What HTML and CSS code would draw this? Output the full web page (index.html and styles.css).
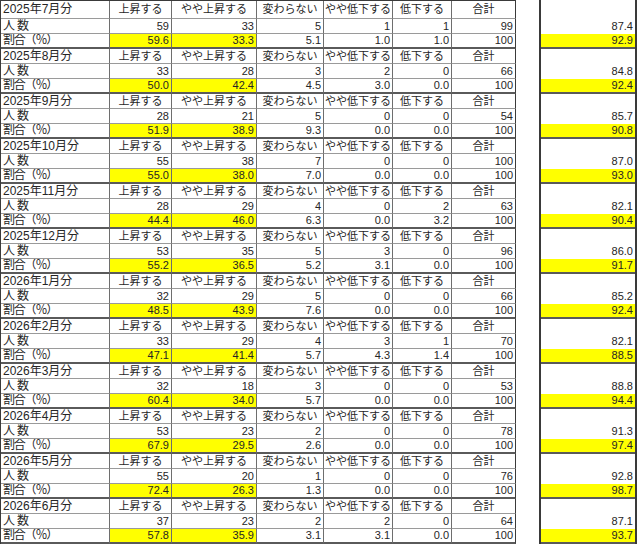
FILE: index.html
```html
<!DOCTYPE html>
<html lang="ja">
<head>
<meta charset="utf-8">
<title>集計表</title>
<link rel="stylesheet" href="styles.css">
</head>
<body>
<div class="sheet">
  <div class="table">
    <div class="block first">
      <div class="c lab">2025年7月分</div><div class="c h">上昇する</div><div class="c h">やや上昇する</div><div class="c h">変わらない</div><div class="c h">やや低下する</div><div class="c h">低下する</div><div class="c h">合計</div>
      <div class="c lab wide">人数</div><div class="c n">59</div><div class="c n">33</div><div class="c n">5</div><div class="c n">1</div><div class="c n">1</div><div class="c n">99</div>
      <div class="c lab pct">割合（％）</div><div class="c n y">59.6</div><div class="c n y">33.3</div><div class="c n">5.1</div><div class="c n">1.0</div><div class="c n">1.0</div><div class="c n">100</div>
    </div>
    <div class="block">
      <div class="c lab">2025年8月分</div><div class="c h">上昇する</div><div class="c h">やや上昇する</div><div class="c h">変わらない</div><div class="c h">やや低下する</div><div class="c h">低下する</div><div class="c h">合計</div>
      <div class="c lab wide">人数</div><div class="c n">33</div><div class="c n">28</div><div class="c n">3</div><div class="c n">2</div><div class="c n">0</div><div class="c n">66</div>
      <div class="c lab pct">割合（％）</div><div class="c n y">50.0</div><div class="c n y">42.4</div><div class="c n">4.5</div><div class="c n">3.0</div><div class="c n">0.0</div><div class="c n">100</div>
    </div>
    <div class="block">
      <div class="c lab">2025年9月分</div><div class="c h">上昇する</div><div class="c h">やや上昇する</div><div class="c h">変わらない</div><div class="c h">やや低下する</div><div class="c h">低下する</div><div class="c h">合計</div>
      <div class="c lab wide">人数</div><div class="c n">28</div><div class="c n">21</div><div class="c n">5</div><div class="c n">0</div><div class="c n">0</div><div class="c n">54</div>
      <div class="c lab pct">割合（％）</div><div class="c n y">51.9</div><div class="c n y">38.9</div><div class="c n">9.3</div><div class="c n">0.0</div><div class="c n">0.0</div><div class="c n">100</div>
    </div>
    <div class="block">
      <div class="c lab">2025年10月分</div><div class="c h">上昇する</div><div class="c h">やや上昇する</div><div class="c h">変わらない</div><div class="c h">やや低下する</div><div class="c h">低下する</div><div class="c h">合計</div>
      <div class="c lab wide">人数</div><div class="c n">55</div><div class="c n">38</div><div class="c n">7</div><div class="c n">0</div><div class="c n">0</div><div class="c n">100</div>
      <div class="c lab pct">割合（％）</div><div class="c n y">55.0</div><div class="c n y">38.0</div><div class="c n">7.0</div><div class="c n">0.0</div><div class="c n">0.0</div><div class="c n">100</div>
    </div>
    <div class="block">
      <div class="c lab">2025年11月分</div><div class="c h">上昇する</div><div class="c h">やや上昇する</div><div class="c h">変わらない</div><div class="c h">やや低下する</div><div class="c h">低下する</div><div class="c h">合計</div>
      <div class="c lab wide">人数</div><div class="c n">28</div><div class="c n">29</div><div class="c n">4</div><div class="c n">0</div><div class="c n">2</div><div class="c n">63</div>
      <div class="c lab pct">割合（％）</div><div class="c n y">44.4</div><div class="c n y">46.0</div><div class="c n">6.3</div><div class="c n">0.0</div><div class="c n">3.2</div><div class="c n">100</div>
    </div>
    <div class="block">
      <div class="c lab">2025年12月分</div><div class="c h">上昇する</div><div class="c h">やや上昇する</div><div class="c h">変わらない</div><div class="c h">やや低下する</div><div class="c h">低下する</div><div class="c h">合計</div>
      <div class="c lab wide">人数</div><div class="c n">53</div><div class="c n">35</div><div class="c n">5</div><div class="c n">3</div><div class="c n">0</div><div class="c n">96</div>
      <div class="c lab pct">割合（％）</div><div class="c n y">55.2</div><div class="c n y">36.5</div><div class="c n">5.2</div><div class="c n">3.1</div><div class="c n">0.0</div><div class="c n">100</div>
    </div>
    <div class="block">
      <div class="c lab">2026年1月分</div><div class="c h">上昇する</div><div class="c h">やや上昇する</div><div class="c h">変わらない</div><div class="c h">やや低下する</div><div class="c h">低下する</div><div class="c h">合計</div>
      <div class="c lab wide">人数</div><div class="c n">32</div><div class="c n">29</div><div class="c n">5</div><div class="c n">0</div><div class="c n">0</div><div class="c n">66</div>
      <div class="c lab pct">割合（％）</div><div class="c n y">48.5</div><div class="c n y">43.9</div><div class="c n">7.6</div><div class="c n">0.0</div><div class="c n">0.0</div><div class="c n">100</div>
    </div>
    <div class="block">
      <div class="c lab">2026年2月分</div><div class="c h">上昇する</div><div class="c h">やや上昇する</div><div class="c h">変わらない</div><div class="c h">やや低下する</div><div class="c h">低下する</div><div class="c h">合計</div>
      <div class="c lab wide">人数</div><div class="c n">33</div><div class="c n">29</div><div class="c n">4</div><div class="c n">3</div><div class="c n">1</div><div class="c n">70</div>
      <div class="c lab pct">割合（％）</div><div class="c n y">47.1</div><div class="c n y">41.4</div><div class="c n">5.7</div><div class="c n">4.3</div><div class="c n">1.4</div><div class="c n">100</div>
    </div>
    <div class="block">
      <div class="c lab">2026年3月分</div><div class="c h">上昇する</div><div class="c h">やや上昇する</div><div class="c h">変わらない</div><div class="c h">やや低下する</div><div class="c h">低下する</div><div class="c h">合計</div>
      <div class="c lab wide">人数</div><div class="c n">32</div><div class="c n">18</div><div class="c n">3</div><div class="c n">0</div><div class="c n">0</div><div class="c n">53</div>
      <div class="c lab pct">割合（％）</div><div class="c n y">60.4</div><div class="c n y">34.0</div><div class="c n">5.7</div><div class="c n">0.0</div><div class="c n">0.0</div><div class="c n">100</div>
    </div>
    <div class="block">
      <div class="c lab">2026年4月分</div><div class="c h">上昇する</div><div class="c h">やや上昇する</div><div class="c h">変わらない</div><div class="c h">やや低下する</div><div class="c h">低下する</div><div class="c h">合計</div>
      <div class="c lab wide">人数</div><div class="c n">53</div><div class="c n">23</div><div class="c n">2</div><div class="c n">0</div><div class="c n">0</div><div class="c n">78</div>
      <div class="c lab pct">割合（％）</div><div class="c n y">67.9</div><div class="c n y">29.5</div><div class="c n">2.6</div><div class="c n">0.0</div><div class="c n">0.0</div><div class="c n">100</div>
    </div>
    <div class="block">
      <div class="c lab">2026年5月分</div><div class="c h">上昇する</div><div class="c h">やや上昇する</div><div class="c h">変わらない</div><div class="c h">やや低下する</div><div class="c h">低下する</div><div class="c h">合計</div>
      <div class="c lab wide">人数</div><div class="c n">55</div><div class="c n">20</div><div class="c n">1</div><div class="c n">0</div><div class="c n">0</div><div class="c n">76</div>
      <div class="c lab pct">割合（％）</div><div class="c n y">72.4</div><div class="c n y">26.3</div><div class="c n">1.3</div><div class="c n">0.0</div><div class="c n">0.0</div><div class="c n">100</div>
    </div>
    <div class="block">
      <div class="c lab">2026年6月分</div><div class="c h">上昇する</div><div class="c h">やや上昇する</div><div class="c h">変わらない</div><div class="c h">やや低下する</div><div class="c h">低下する</div><div class="c h">合計</div>
      <div class="c lab wide">人数</div><div class="c n">37</div><div class="c n">23</div><div class="c n">2</div><div class="c n">2</div><div class="c n">0</div><div class="c n">64</div>
      <div class="c lab pct">割合（％）</div><div class="c n y">57.8</div><div class="c n y">35.9</div><div class="c n">3.1</div><div class="c n">3.1</div><div class="c n">0.0</div><div class="c n">100</div>
    </div>
  </div>

  <div class="side">
    <div class="sblock first"><div class="s"></div><div class="s n">87.4</div><div class="s n y">92.9</div></div>
    <div class="sblock"><div class="s"></div><div class="s n">84.8</div><div class="s n y">92.4</div></div>
    <div class="sblock"><div class="s"></div><div class="s n">85.7</div><div class="s n y">90.8</div></div>
    <div class="sblock"><div class="s"></div><div class="s n">87.0</div><div class="s n y">93.0</div></div>
    <div class="sblock"><div class="s"></div><div class="s n">82.1</div><div class="s n y">90.4</div></div>
    <div class="sblock"><div class="s"></div><div class="s n">86.0</div><div class="s n y">91.7</div></div>
    <div class="sblock"><div class="s"></div><div class="s n">85.2</div><div class="s n y">92.4</div></div>
    <div class="sblock"><div class="s"></div><div class="s n">82.1</div><div class="s n y">88.5</div></div>
    <div class="sblock"><div class="s"></div><div class="s n">88.8</div><div class="s n y">94.4</div></div>
    <div class="sblock"><div class="s"></div><div class="s n">91.3</div><div class="s n y">97.4</div></div>
    <div class="sblock"><div class="s"></div><div class="s n">92.8</div><div class="s n y">98.7</div></div>
    <div class="sblock"><div class="s"></div><div class="s n">87.1</div><div class="s n y">93.7</div></div>
  </div>
</div>
</body>
</html>
```

FILE: styles.css
```css
* { box-sizing: border-box; }

body {
  margin: 0;
  background: #ffffff;
  color: #262626;
  font-family: "Liberation Sans", "Noto Sans CJK JP", sans-serif;
  font-size: 11px;
}

.sheet {
  display: flex;
  align-items: flex-start;
}

.table {
  width: 516px;
  border-left: 1px solid #3a3a3a;
}

.block {
  display: grid;
  grid-template-columns: 109px 62px 85px 67px 69px 59px 64px;
  grid-template-rows: 15px 15px 15px;
}

.block.first {
  border-top: 1px solid #3a3a3a;
  grid-template-rows: 18px 15px 15px;
}

.c {
  border-right: 1px solid #6e6e6e;
  border-bottom: 1px solid #9a9a9a;
  line-height: 14px;
  white-space: nowrap;
  overflow: hidden;
}

.c:nth-child(7n) {
  border-right-color: #3a3a3a;
}

.c:nth-child(n+15) {
  border-bottom: 2px solid #5a5a5a;
  line-height: 13px;
}

.block.first .c:nth-child(-n+7) {
  line-height: 17px;
}

.lab {
  padding-left: 2px;
  text-align: left;
  font-size: 12px;
}

.lab.wide {
  letter-spacing: 2px;
}

.lab.pct {
  letter-spacing: -1.2px;
}

.h {
  text-align: center;
}

.n {
  text-align: right;
  padding-right: 2px;
}

.y {
  background: #ffff00;
}

.side {
  margin-left: 23px;
  width: 98px;
  border-left: 2px solid #3a3a3a;
  border-right: 2px solid #3a3a3a;
}

.sblock {
  display: grid;
  grid-template-rows: 15px 15px 15px;
}

.sblock.first {
  grid-template-rows: 19px 15px 15px;
}

.s {
  line-height: 15px;
  white-space: nowrap;
}

.s:last-child {
  border-bottom: 2px solid #5a5a5a;
  line-height: 13px;
}
```
